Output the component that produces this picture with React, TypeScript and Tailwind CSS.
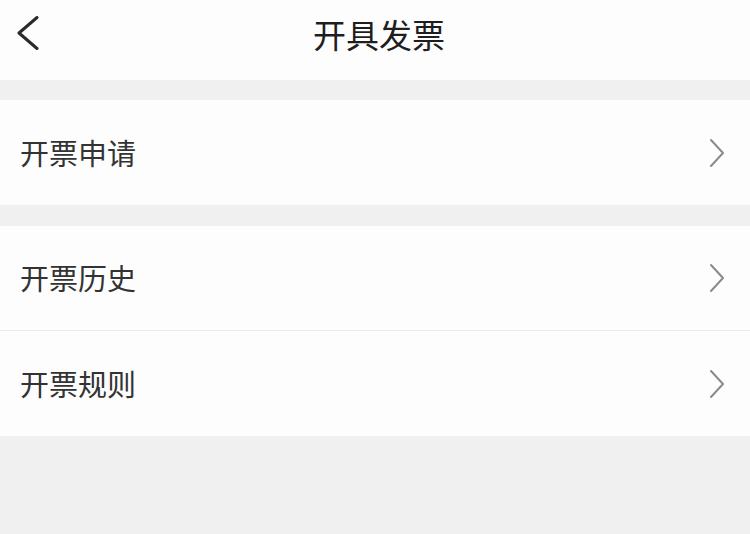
const font = { fontFamily: '"Noto Sans CJK SC", "Noto Sans", sans-serif' };

function ChevronRight() {
  return (
    <svg width="18" height="30" viewBox="0 0 18 30" fill="none">
      <path d="M3 2 L15 15 L3 28" stroke="#8a8a8a" strokeWidth="2" strokeLinecap="round" strokeLinejoin="round" />
    </svg>
  );
}

function Row({ label, border }: { label: string; border?: boolean }) {
  return (
    <div className={`flex h-[105px] items-center justify-between bg-[#fdfdfd] pl-[20px] pr-[24px] ${border ? "border-b border-[#ebebeb]" : ""}`}>
      <span className="text-[29px] text-[#333]">{label}</span>
      <ChevronRight />
    </div>
  );
}

export default function App() {
  return (
    <div className="flex h-[534px] w-[750px] flex-col bg-[#f0f0f0]" style={font}>
      {/* Header */}
      <div className="relative flex h-[80px] items-center justify-center bg-[#fdfdfd] pb-[10px]">
        <button className="absolute left-[16px] top-[16px]">
          <svg width="24" height="34" viewBox="0 0 24 34" fill="none">
            <path d="M21 1.5 L3 17 L21 32.5" stroke="#2a2a2a" strokeWidth="3" strokeLinecap="round" strokeLinejoin="round" />
          </svg>
        </button>
        <span className="pl-[8px] text-[33px] text-[#1e1e1e]">开具发票</span>
      </div>

      <div className="h-[20px]" />
      <Row label="开票申请" />

      <div className="h-[21px]" />
      <Row label="开票历史" border />
      <Row label="开票规则" />
    </div>
  );
}
